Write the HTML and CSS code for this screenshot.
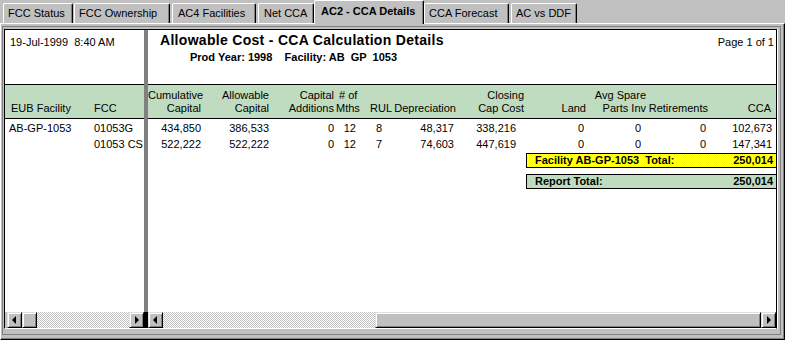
FILE: index.html
```html
<!DOCTYPE html>
<html lang="en">
<head>
<meta charset="UTF-8">
<title>AC2 - CCA Details</title>
<link rel="stylesheet" href="styles.css">
</head>
<body>
<div class="window">
    <div class="tabs">
        <div class="tab">FCC Status</div>
        <div class="tab">FCC Ownership</div>
        <div class="tab">AC4 Facilities</div>
        <div class="tab">Net CCA</div>
        <div class="tab active">AC2 - CCA Details</div>
        <div class="tab">CCA Forecast</div>
        <div class="tab">AC vs DDF</div>
    </div>

    <div class="page">
        <div class="frame">
            <div class="view">

                <!-- fixed left pane -->
                <div class="pane pane-left">
                    <div class="body">
                        <div class="rep-head">
                            <div class="stamp">19-Jul-1999  8:40 AM</div>
                        </div>
                        <div class="col-head lhead">
                            <div class="fac">EUB Facility</div>
                            <div class="fcc">FCC</div>
                        </div>
                        <div class="rows">
                            <div class="lrow"><div class="fac">AB-GP-1053</div><div class="fcc">01053G</div></div>
                            <div class="lrow"><div class="fac"></div><div class="fcc">01053 CS</div></div>
                        </div>
                    </div>
                    <div class="hscroll left-scroll">
                        <div class="sb-btn"><span class="arr-l"></span></div>
                        <div class="sb-thumb"></div>
                        <div class="sb-track"></div>
                        <div class="sb-btn"><span class="arr-r"></span></div>
                    </div>
                </div>

                <div class="split">
                    <div class="split-body"></div>
                    <div class="split-foot"></div>
                </div>

                <!-- scrolling report pane -->
                <div class="pane pane-right">
                    <div class="body">
                        <div class="rep-head rhead">
                            <div class="titles">
                                <div class="title">Allowable Cost - CCA Calculation Details</div>
                                <div class="sub">Prod Year: 1998    Facility: AB  GP  1053</div>
                            </div>
                            <div class="pageno">Page 1 of 1</div>
                        </div>
                        <div class="col-head grid">
                            <div>Cumulative<br>Capital</div>
                            <div>Allowable<br>Capital</div>
                            <div>Capital<br>Additions</div>
                            <div class="lft">&nbsp;# of<br>Mths</div>
                            <div class="lft rul">RUL</div>
                            <div>Depreciation</div>
                            <div>Closing<br>Cap Cost</div>
                            <div>Land</div>
                            <div>Avg Spare<br>Parts Inv</div>
                            <div>Retirements</div>
                            <div class="cca">CCA</div>
                            <div></div>
                        </div>
                        <div class="rows">
                            <div class="grid vrow">
                                <div>434,850</div><div>386,533</div><div>0</div><div>12</div><div>8</div>
                                <div>48,317</div><div>338,216</div><div>0</div><div>0</div><div>0</div><div>102,673</div><div></div>
                            </div>
                            <div class="grid vrow">
                                <div>522,222</div><div>522,222</div><div>0</div><div>12</div><div>7</div>
                                <div>74,603</div><div>447,619</div><div>0</div><div>0</div><div>0</div><div>147,341</div><div></div>
                            </div>
                        </div>
                        <div class="total fac-total"><span>Facility AB-GP-1053  Total:</span><span>250,014</span></div>
                        <div class="total rep-total"><span>Report Total:</span><span>250,014</span></div>
                    </div>
                    <div class="hscroll right-scroll">
                        <div class="sb-btn"><span class="arr-l"></span></div>
                        <div class="sb-track"></div>
                        <div class="sb-thumb"></div>
                        <div class="sb-btn"><span class="arr-r"></span></div>
                    </div>
                </div>

            </div>
        </div>
    </div>
</div>
</body>
</html>
```

FILE: styles.css
```css
body {
    margin: 0;
    background-color: #c0c0c0;
    font-family: "Liberation Sans", Arial, sans-serif;
    font-size: 11px;
    line-height: 13px;
    color: #000;
}
.window {
    width: 785px;
    height: 340px;
    overflow: hidden;
}

/* tab strip */
.tabs {
    display: flex;
    align-items: flex-end;
    height: 23px;
    padding-left: 3px;
}
.tab {
    box-sizing: border-box;
    height: 20px;
    padding: 3px 0 0 4px;
    border: 1px solid #fff;
    border-right-color: #000;
    border-bottom: 0;
    border-radius: 2px 2px 0 0;
    box-shadow: inset -1px 0 #808080;
    background-color: #c0c0c0;
    white-space: nowrap;
}
.tab:nth-child(1) { width: 70px; }
.tab:nth-child(2) { width: 96px; margin-left: 1px; }
.tab:nth-child(3) { width: 84px; margin-left: 2px; padding-left: 5px; }
.tab:nth-child(4) { width: 56px; margin-left: 2px; padding-left: 5px; }
.tab:nth-child(5) { width: 110px; }
.tab:nth-child(6) { width: 85px; }
.tab:nth-child(7) { width: 66px; margin-left: 2px; }
.tab.active {
    position: relative;
    z-index: 1;
    height: 24px;
    margin-bottom: -1px;
    padding: 4px 0 0 6px;
    font-weight: bold;
}

/* tab page + sunken view */
.page {
    box-sizing: border-box;
    height: 317px;
    border: 1px solid;
    border-color: #fff #000 #000 #fff;
    padding: 2px 3px 4px 1px;
    box-shadow: inset -1px -1px #808080;
}
.frame {
    border: 1px solid #808080;
    padding: 2px 3px 5px 1px;
}
.view {
    display: flex;
    height: 298px;
    border: 1px solid #000;
    border-bottom-color: #fff;
    box-shadow: 1px 0 #fff;
    background-color: #fff;
}
.pane {
    display: flex;
    flex-direction: column;
}
.pane-left { width: 139px; }
.pane-right { width: 628px; }
.body {
    flex: 1;
    background-color: #fff;
}
.split {
    width: 4px;
    display: flex;
    flex-direction: column;
}
.split-body {
    flex: 1;
    background-color: #808080;
}
.split-foot {
    height: 16px;
    background-color: #000;
}

/* report header */
.rep-head {
    box-sizing: border-box;
    height: 54px;
}
.stamp {
    padding: 6px 0 0 5px;
    white-space: pre;
}
.rhead {
    display: flex;
    justify-content: space-between;
}
.titles {
    padding: 2px 0 0 12px;
}
.title {
    font-size: 14px;
    line-height: 16px;
    font-weight: bold;
    letter-spacing: 0.3px;
}
.sub {
    margin-top: 3px;
    padding-left: 30px;
    font-weight: bold;
    white-space: pre;
}
.pageno {
    padding: 6px 2px 0 0;
}

/* column headings */
.col-head {
    height: 26px;
    padding: 4px 0 3px;
    border-top: 1px solid #000;
    border-bottom: 1px solid #000;
    background-color: #c0dcc0;
}
.lhead {
    display: flex;
    align-items: flex-end;
}
.fac {
    width: 89px;
}
.lhead .fac {
    padding-left: 6px;
    width: 83px;
}
.lrow .fac {
    padding-left: 4px;
    width: 85px;
}
.lrow {
    display: flex;
    line-height: 16px;
    white-space: nowrap;
}
.rows {
    padding-top: 1px;
}

.grid {
    display: grid;
    grid-template-columns: 53px 68px 65px 31px 27px 64px 68px 62px 60px 62px 64px 1fr;
    text-align: right;
    white-space: nowrap;
}
.col-head.grid {
    align-items: end;
}
.col-head .lft { text-align: left; padding-left: 2px; }
.col-head .rul { padding-left: 5px; }
.col-head .cca { padding-right: 1px; }

.vrow {
    line-height: 16px;
}
.vrow > :nth-child(4) { padding-right: 9px; }
.vrow > :nth-child(5) { padding-right: 10px; }
.vrow > :nth-child(6) { padding-right: 2px; }
.vrow > :nth-child(7) { padding-right: 8px; }
.vrow > :nth-child(8) { padding-right: 2px; }
.vrow > :nth-child(9) { padding-right: 5px; }
.vrow > :nth-child(10) { padding-right: 2px; }

/* totals */
.total {
    display: flex;
    justify-content: space-between;
    margin-left: 378px;
    padding: 0 3px 0 8px;
    border: 1px solid #000;
    border-right: 0;
    font-weight: bold;
    white-space: pre;
}
.fac-total {
    margin-top: 1px;
    background: repeating-conic-gradient(#ffff00 0 25%, #ffff90 0 50%) 0 0 / 2px 2px;
}
.rep-total {
    margin-top: 6px;
    background-color: #c0dcc0;
}

/* scrollbars */
.hscroll {
    display: flex;
    height: 16px;
    background-color: #c0c0c0;
}
.left-scroll {
    padding-left: 2px;
}
.sb-btn, .sb-thumb {
    box-sizing: border-box;
    width: 15px;
    height: 16px;
    border: 1px solid;
    border-color: #dfdfdf #000 #000 #dfdfdf;
    box-shadow: inset 1px 1px #fff, inset -1px -1px #808080;
    background-color: #c0c0c0;
}
.sb-btn {
    display: flex;
    align-items: center;
    justify-content: center;
}
.sb-track {
    flex: 1;
    background: repeating-conic-gradient(#c0c0c0 0 25%, #fff 0 50%) 0 0 / 2px 2px;
}
.right-scroll .sb-track {
    flex: none;
    width: 212px;
}
.right-scroll .sb-thumb {
    flex: 1;
}
.arr-l, .arr-r {
    width: 0;
    height: 0;
    border-style: solid;
    border-color: transparent;
}
.arr-l {
    border-width: 4px 4px 4px 0;
    border-right-color: #000;
    margin-left: -1px;
}
.arr-r {
    border-width: 4px 0 4px 4px;
    border-left-color: #000;
}
```
